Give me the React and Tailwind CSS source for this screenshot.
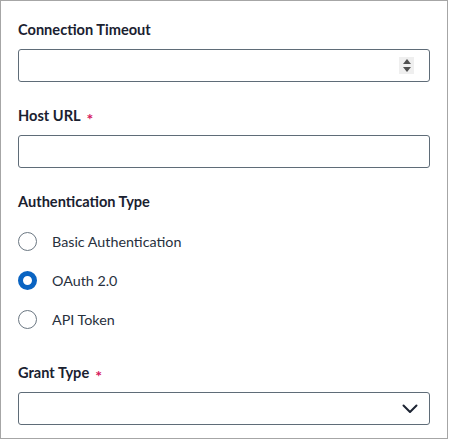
import React, { useState } from "react";

const font = { fontFamily: "Lato, 'Open Sans', sans-serif" };

const Label = ({ children, required }) => (
  <div className="h-5 flex items-center text-[14.6px] font-bold text-[#1a2130] mb-[9px]">
    {children}
    {required && <span className="ml-[6px] text-[#d6175c] text-[16px] font-bold leading-none relative top-[3px]">*</span>}
  </div>
);

const Radio = ({ label, checked, onClick }) => (
  <div className="h-[39px] flex items-center cursor-pointer" onClick={onClick}>
    <span
      className={`w-[19px] h-[19px] rounded-full shrink-0 ${
        checked ? "border-[5px] border-[#0a64c2] bg-white" : "border border-[#6b7782] bg-white"
      }`}
    />
    <span className="ml-[15px] text-[14.3px] text-[#27303d]">{label}</span>
  </div>
);

export default function App() {
  const [auth, setAuth] = useState("oauth");

  return (
    <div style={font} className="w-[448px] h-[439px] border border-[#a6a6a6] bg-white px-[17px] pt-[19px]">
      {/* Connection Timeout */}
      <div>
        <Label>Connection Timeout</Label>
        <div className="h-[33px] border border-[#5f6c78] rounded-[3px] flex items-center justify-end pr-[15px]">
          <div className="w-[15px] h-[17px] bg-[#efefef] flex flex-col items-center justify-center gap-[3px]">
            <svg width="8" height="5" viewBox="0 0 8 5">
              <path d="M4 0 L8 5 L0 5 Z" fill="#505050" />
            </svg>
            <svg width="8" height="5" viewBox="0 0 8 5">
              <path d="M0 0 L8 0 L4 5 Z" fill="#505050" />
            </svg>
          </div>
        </div>
      </div>

      {/* Host URL */}
      <div className="mt-[24px]">
        <Label required>Host URL</Label>
        <div className="h-[33px] border border-[#5f6c78] rounded-[3px]" />
      </div>

      {/* Authentication Type */}
      <div className="mt-[24px]">
        <div className="h-5 flex items-center text-[14.6px] font-bold text-[#1a2130] mb-[10px]">
          Authentication Type
        </div>
        <Radio label="Basic Authentication" checked={auth === "basic"} onClick={() => setAuth("basic")} />
        <Radio label="OAuth 2.0" checked={auth === "oauth"} onClick={() => setAuth("oauth")} />
        <Radio label="API Token" checked={auth === "token"} onClick={() => setAuth("token")} />
      </div>

      {/* Grant Type */}
      <div className="mt-[24px]">
        <Label required>Grant Type</Label>
        <div className="h-[33px] border border-[#5f6c78] rounded-[3px] flex items-center justify-end pr-[11px]">
          <svg width="16" height="10" viewBox="0 0 16 10" fill="none">
            <path d="M1.5 1.5 L8 8 L14.5 1.5" stroke="#1d2433" strokeWidth="2" strokeLinecap="round" strokeLinejoin="round" />
          </svg>
        </div>
      </div>
    </div>
  );
}
